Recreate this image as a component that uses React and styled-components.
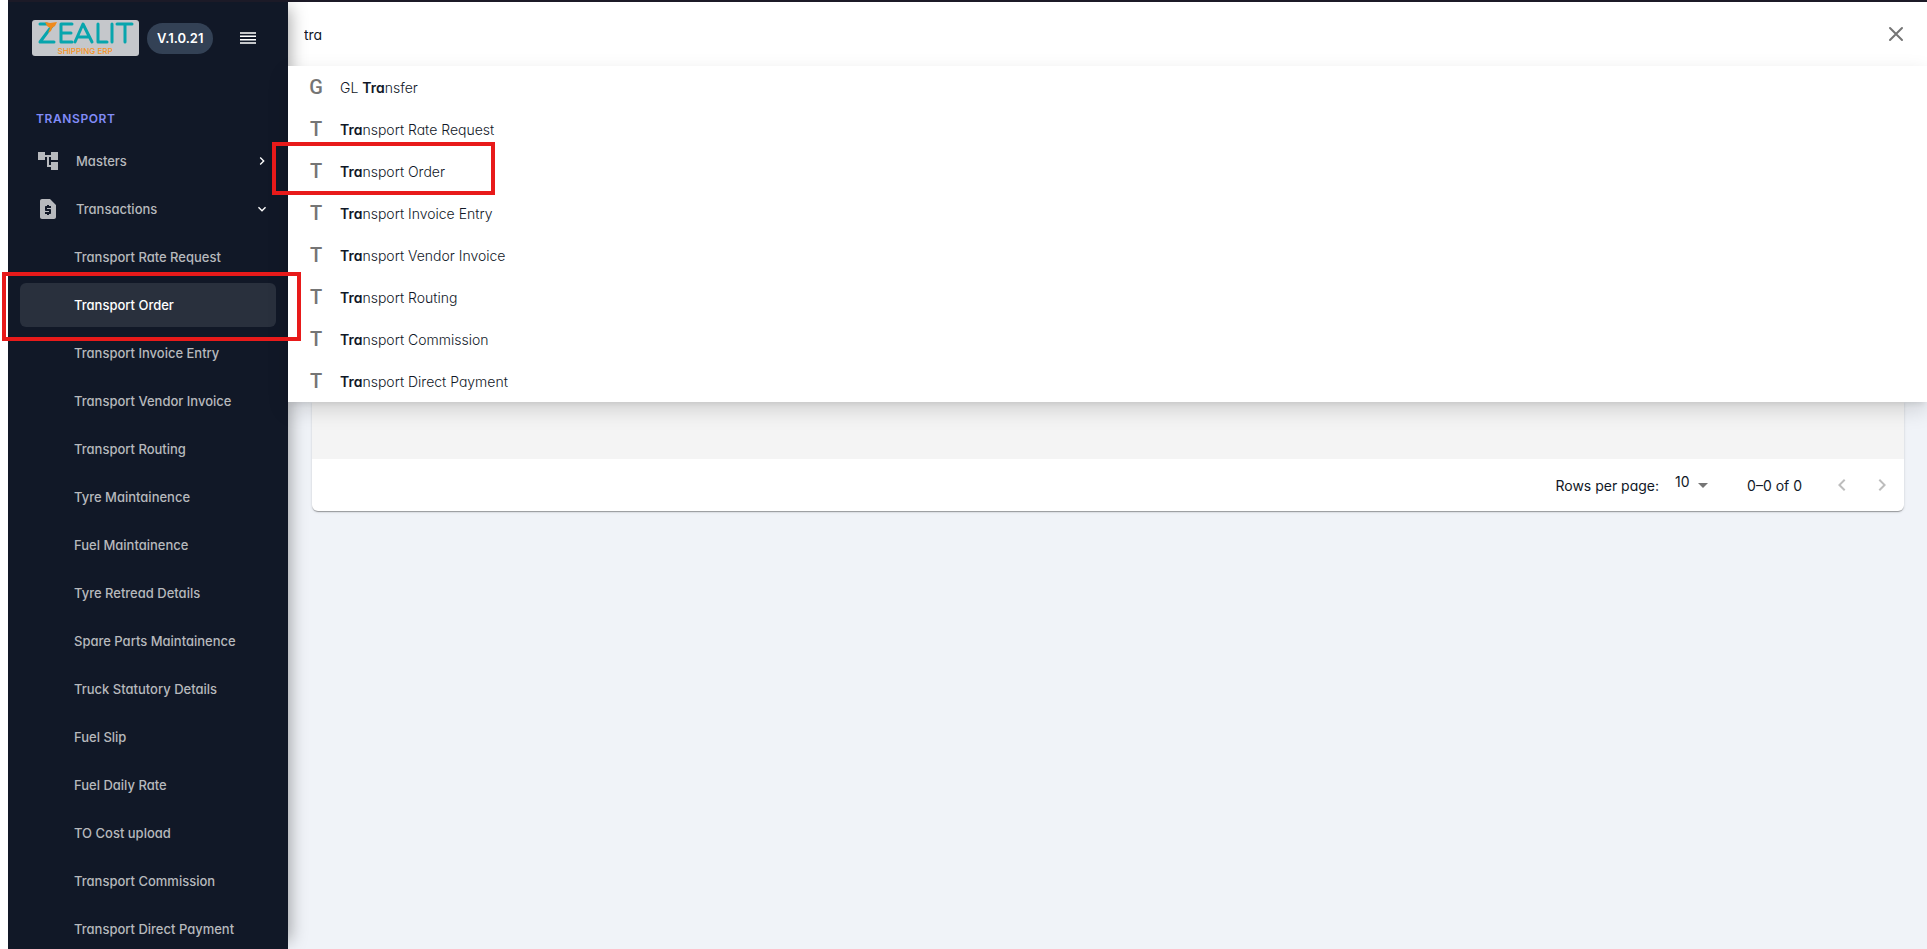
import React, { useState } from "react";
import styled, { createGlobalStyle } from "styled-components";
import {
  MdAccountTree,
  MdRequestPage,
  MdChevronRight,
  MdExpandMore,
  MdArrowDropDown,
  MdKeyboardArrowLeft,
  MdKeyboardArrowRight,
} from "react-icons/md";
import { HiOutlineX } from "react-icons/hi";

const GlobalStyle = createGlobalStyle`
  *, *::before, *::after {
    box-sizing: border-box;
  }
  body {
    margin: 0;
    background-color: white;
    color: #111827;
    font-family: Inter, "Liberation Sans", sans-serif;
    font-feature-settings: "cv11";
    font-size: 14px;
  }
  button, input, select {
    font: inherit;
    font-feature-settings: inherit;
    color: inherit;
  }
  button {
    display: flex;
    align-items: center;
    justify-content: center;
    padding: 0;
    border: none;
    background: none;
    cursor: pointer;
  }
`;

const Page = styled.div`
  display: flex;
  height: 100vh;
  padding-left: 8px;
  overflow: hidden;
`;

/* sidebar */
const Sidebar = styled.aside`
  position: relative;
  flex: 0 0 280px;
  border-top: 2px solid #1c1a27;
  background-color: #111827;
  color: #b7b9bd;
  box-shadow: 10px 0 16px -8px rgba(0, 0, 0, 0.35);
`;
const SidebarHeader = styled.div`
  display: flex;
  align-items: center;
  height: 72px;
  padding: 0 20px 0 24px;
`;
const LogoSvg = styled.svg`
  display: block;
  width: 107px;
  height: 36px;
`;
const Version = styled.span`
  margin-left: 8px;
  padding: 0 10px;
  border-radius: 16px;
  background-color: #334155;
  color: white;
  font-size: 13px;
  font-weight: 600;
  line-height: 31px;
`;
const MenuButton = styled.button`
  width: 40px;
  height: 40px;
  margin-left: auto;
`;
const Nav = styled.nav`
  padding: 20px 12px 0;
`;
const NavTitle = styled.h2`
  margin: 0;
  padding: 15px 16px 10px;
  color: #818cf8;
  font-size: 12px;
  font-weight: 600;
  letter-spacing: 0.05em;
  line-height: 20px;
`;
const NavList = styled.ul`
  margin: 0;
  padding: 0;
  list-style: none;
`;
const NavItem = styled.li`
  position: relative;
  margin-bottom: 4px;
`;
const NavGroup = styled.button`
  width: 100%;
  height: 44px;
  padding: 0 6px 0 16px;
  gap: 16px;
  font-size: 13px;
  font-weight: 500;
`;
const NavGroupText = styled.span`
  flex: 1;
  text-align: left;
`;
const NavLink = styled.a`
  display: flex;
  align-items: center;
  height: 44px;
  padding-left: 54px;
  border-radius: 6px;
  background-color: ${(props) => (props.$active ? "#29303d" : "transparent")};
  color: ${(props) => (props.$active ? "white" : "inherit")};
  font-size: 13px;
  font-weight: 500;
  text-decoration: none;
`;

/* red frames that call out an entry */
const Frame = styled.span`
  position: absolute;
  z-index: 2;
  border: 4px solid #e81a1a;
  pointer-events: none;
`;
const NavFrame = styled(Frame)`
  inset: -11px -25px -14px -18px;
`;
const ResultFrame = styled(Frame)`
  top: -8px;
  bottom: -3px;
  left: -16px;
  width: 223px;
`;

/* main */
const Main = styled.main`
  flex: 1;
  min-width: 0;
  border-top: 2px solid #1c1a27;
  background-color: #f0f3f8;
`;
const SearchBar = styled.div`
  display: flex;
  align-items: center;
  height: 64px;
  padding: 0 11px 0 16px;
  background-color: white;
`;
const SearchInput = styled.input`
  flex: 1;
  padding: 0;
  border: none;
  outline: none;
  background: none;
`;
const CloseButton = styled.button`
  width: 40px;
  height: 40px;
  color: #757575;
  font-size: 24px;
`;
const Results = styled.ul`
  position: relative;
  z-index: 1;
  margin: 0;
  padding: 0;
  background-color: white;
  list-style: none;
  box-shadow: 0 5px 5px -3px rgba(0, 0, 0, 0.08),
    0 8px 20px rgba(0, 0, 0, 0.14);
`;
const Result = styled.li`
  position: relative;
`;
const ResultButton = styled.button`
  width: 100%;
  height: 42px;
  padding: 0 16px;
  justify-content: flex-start;
  font-weight: 300;
`;
const Initial = styled.span`
  width: 24px;
  margin-right: 12px;
  color: #757575;
  font-family: Roboto, sans-serif;
  font-size: 20px;
  font-weight: 500;
  text-align: center;
`;
const Match = styled.strong`
  font-weight: 600;
`;

const TableCard = styled.section`
  margin: 0 23px 0 24px;
  border-radius: 0 0 6px 6px;
  background-color: white;
  box-shadow: 0 2px 1px -1px rgba(0, 0, 0, 0.2), 0 1px 1px rgba(0, 0, 0, 0.14),
    0 1px 3px rgba(0, 0, 0, 0.12);
`;
const TableBody = styled.div`
  height: 57px;
  background-color: #f4f4f4;
`;
const Pagination = styled.div`
  display: flex;
  align-items: center;
  justify-content: flex-end;
  height: 52px;
  padding-right: 2px;
`;
const SelectBox = styled.div`
  display: flex;
  align-items: center;
  margin: 0 32px 0 16px;
`;
const RowsSelect = styled.select`
  width: 40px;
  height: 32px;
  margin-right: -24px;
  padding: 0 24px 8px 0;
  border: none;
  outline: none;
  background: none;
  appearance: none;
`;
const SelectArrow = styled(MdArrowDropDown)`
  color: #757575;
  font-size: 24px;
  pointer-events: none;
`;
const PageButtons = styled.div`
  display: flex;
  margin-left: 20px;
`;
const PageButton = styled.button`
  width: 40px;
  height: 40px;
  color: #bdbdbd;
  font-size: 24px;
`;

const navItems = [
  "Transport Rate Request",
  "Transport Order",
  "Transport Invoice Entry",
  "Transport Vendor Invoice",
  "Transport Routing",
  "Tyre Maintainence",
  "Fuel Maintainence",
  "Tyre Retread Details",
  "Spare Parts Maintainence",
  "Truck Statutory Details",
  "Fuel Slip",
  "Fuel Daily Rate",
  "TO Cost upload",
  "Transport Commission",
  "Transport Direct Payment",
];

const results = [
  "GL Transfer",
  "Transport Rate Request",
  "Transport Order",
  "Transport Invoice Entry",
  "Transport Vendor Invoice",
  "Transport Routing",
  "Transport Commission",
  "Transport Direct Payment",
];

const current = "Transport Order";

const Logo = () => (
  <LogoSvg viewBox="0 0 107 36" role="img" aria-label="Zealit Shipping ERP">
    <rect width="107" height="36" rx="3" fill="#c5c7cb" />
    <g
      fill="none"
      stroke="#07a5ad"
      strokeWidth="3"
      strokeLinecap="round"
      strokeLinejoin="round"
    >
      <path d="M8 4H15M20 6L8 22H22" />
      <path d="M40 4H29V22H40M29 13H39" />
      <path d="M43 22L51 4L60 22M46 17H57" />
      <path d="M66 4V22H75M80 4V22M85 4H100M93 4V22" />
    </g>
    <path
      d="M13 2L18 3L25 2L23 6L20 8L19 11L16 13L18 8L15 6Z"
      fill="#f08a1c"
    />
    <text
      x="53"
      y="34"
      textAnchor="middle"
      fill="#f7931e"
      fontFamily="Inter, sans-serif"
      fontSize="8"
      fontWeight="500"
    >
      SHIPPING ERP
    </text>
  </LogoSvg>
);

const MenuIcon = () => (
  <svg width="16" height="12" shapeRendering="crispEdges" aria-hidden="true">
    <path d="M0 0H16V2H0ZM0 10H16V12H0Z" fill="#c5c7ca" />
    <path d="M0 4H16V5H0ZM0 7H16V8H0Z" fill="white" />
    <path d="M0 3H16V4H0ZM0 8H16V9H0Z" fill="#8b8f97" />
  </svg>
);

const ResultText = ({ text, query }) => {
  const at = query ? text.toLowerCase().indexOf(query.toLowerCase()) : -1;
  if (at < 0) return <span>{text}</span>;
  return (
    <span>
      {text.slice(0, at)}
      <Match>{text.slice(at, at + query.length)}</Match>
      {text.slice(at + query.length)}
    </span>
  );
};

const App = () => {
  const [query, setQuery] = useState("tra");

  return (
    <>
      <GlobalStyle />
      <Page>
        <Sidebar>
          <SidebarHeader>
            <Logo />
            <Version>V.1.0.21</Version>
            <MenuButton aria-label="Toggle menu">
              <MenuIcon />
            </MenuButton>
          </SidebarHeader>
          <Nav>
            <NavTitle>TRANSPORT</NavTitle>
            <NavList>
              <NavItem>
                <NavGroup>
                  <MdAccountTree size={24} />
                  <NavGroupText>Masters</NavGroupText>
                  <MdChevronRight size={16} color="white" />
                </NavGroup>
              </NavItem>
              <NavItem>
                <NavGroup>
                  <MdRequestPage size={24} />
                  <NavGroupText>Transactions</NavGroupText>
                  <MdExpandMore size={16} color="white" />
                </NavGroup>
              </NavItem>
              {navItems.map((item) => (
                <NavItem key={item}>
                  <NavLink href="#" $active={item === current}>
                    {item}
                  </NavLink>
                  {item === current && <NavFrame />}
                </NavItem>
              ))}
            </NavList>
          </Nav>
        </Sidebar>
        <Main>
          <SearchBar>
            <SearchInput
              aria-label="Search"
              value={query}
              onChange={(e) => setQuery(e.target.value)}
            />
            <CloseButton aria-label="Close search" onClick={() => setQuery("")}>
              <HiOutlineX />
            </CloseButton>
          </SearchBar>
          <Results>
            {results.map((item) => (
              <Result key={item}>
                <ResultButton>
                  <Initial>{item[0]}</Initial>
                  <ResultText text={item} query={query} />
                </ResultButton>
                {item === current && <ResultFrame />}
              </Result>
            ))}
          </Results>
          <TableCard>
            <TableBody />
            <Pagination>
              <label htmlFor="rows">Rows per page:</label>
              <SelectBox>
                <RowsSelect id="rows" defaultValue="10">
                  <option>10</option>
                  <option>25</option>
                  <option>50</option>
                </RowsSelect>
                <SelectArrow />
              </SelectBox>
              <span>0–0 of 0</span>
              <PageButtons>
                <PageButton aria-label="Previous page" disabled>
                  <MdKeyboardArrowLeft />
                </PageButton>
                <PageButton aria-label="Next page" disabled>
                  <MdKeyboardArrowRight />
                </PageButton>
              </PageButtons>
            </Pagination>
          </TableCard>
        </Main>
      </Page>
    </>
  );
};

export default App;
